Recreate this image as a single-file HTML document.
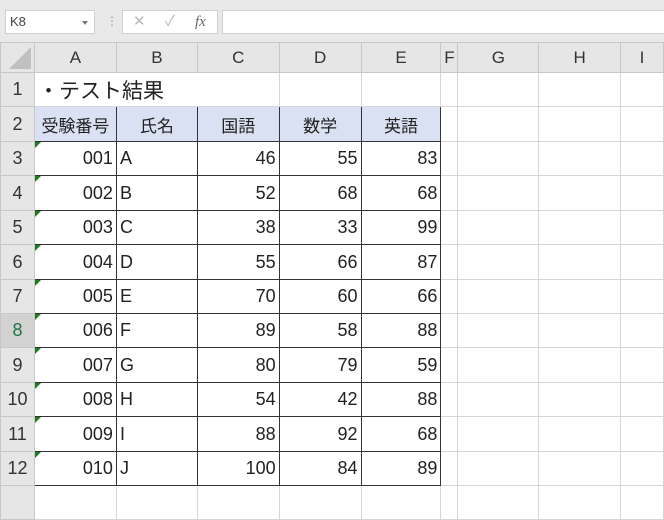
<!DOCTYPE html><html><head><meta charset="utf-8"><style>
body{margin:0;width:664px;height:497px;overflow:hidden;background:#fff;font-family:"Liberation Sans","Noto Sans CJK JP",sans-serif;position:relative}
.top{position:absolute;left:0;top:0;width:664px;height:42px;background:#e9e9e9}
.nb{position:absolute;left:5px;top:10px;width:90px;height:24px;background:#fff;border:1px solid #d0d0d0;box-sizing:border-box;font-size:13px;color:#444;line-height:22px;padding-left:4px}
.nb:after{content:"";position:absolute;right:6px;top:10px;border:3px solid transparent;border-top:4px solid #777}
.fx{position:absolute;left:122px;top:10px;width:96px;height:24px;background:#fff;border:1px solid #d0d0d0;box-sizing:border-box;color:#bbb;font-size:15px;line-height:22px}
.fb{position:absolute;left:222px;top:10px;width:450px;height:24px;background:#fff;border:1px solid #d0d0d0;box-sizing:border-box}
table{position:absolute;left:0;top:42px;border-collapse:collapse;table-layout:fixed}
td{border:1px solid #d6d6d6;padding:0 3px;font-size:18px;color:#222;white-space:nowrap;overflow:hidden;box-sizing:border-box;position:relative}
tr.h td{background:#e6e6e6;text-align:center;color:#333;font-size:17px;border-color:#c8c8c8;height:30px}
td.r{background:#e6e6e6;text-align:center;color:#333;font-size:18px;border-color:#c8c8c8;padding:0}
td.sel{background:#d2d2d2;color:#217346}
.d{border:1px solid #333}
.hd{background:#d9e1f2;text-align:center;font-size:17px}
.n{text-align:right}
.g:before{content:"";position:absolute;left:0;top:0;border-top:6px solid #1e7b1e;border-right:6px solid transparent}
</style></head><body>
<div class="top"></div>
<div class="nb">K8</div>
<div style="position:absolute;left:106px;top:14px;color:#999;font-size:12px">⋮</div>
<div class="fx"><span style="position:absolute;left:10px">✕</span><span style="position:absolute;left:42px">✓</span><span style="position:absolute;left:72px;color:#666;font-style:italic;font-family:'Liberation Serif',serif">fx</span></div>
<div class="fb"></div>
<table>
<colgroup><col style="width:34px"><col style="width:82px"><col style="width:81px"><col style="width:82px"><col style="width:82px"><col style="width:80px"><col style="width:17px"><col style="width:81px"><col style="width:82px"><col style="width:43px"></colgroup>
<tr class="h"><td style="position:relative"><div style="position:absolute;right:3px;bottom:3px;border-left:22px solid transparent;border-bottom:22px solid #c0c0c0"></div></td><td>A</td><td>B</td><td>C</td><td>D</td><td>E</td><td style="padding:0">F</td><td>G</td><td>H</td><td>I</td></tr>
<tr style="height:34px"><td class="r">1</td><td colspan="2" style="font-size:21px;border-right-color:#fff">・テスト結果</td><td></td><td></td><td></td><td></td><td></td><td></td><td></td></tr>
<tr style="height:35px"><td class="r">2</td><td class="d hd">受験番号</td><td class="d hd">氏名</td><td class="d hd">国語</td><td class="d hd">数学</td><td class="d hd">英語</td><td></td><td></td><td></td><td></td></tr>
<tr style="height:34px"><td class="r">3</td><td class="d n g">001</td><td class="d">A</td><td class="d n">46</td><td class="d n">55</td><td class="d n">83</td><td></td><td></td><td></td><td></td></tr>
<tr style="height:35px"><td class="r">4</td><td class="d n g">002</td><td class="d">B</td><td class="d n">52</td><td class="d n">68</td><td class="d n">68</td><td></td><td></td><td></td><td></td></tr>
<tr style="height:34px"><td class="r">5</td><td class="d n g">003</td><td class="d">C</td><td class="d n">38</td><td class="d n">33</td><td class="d n">99</td><td></td><td></td><td></td><td></td></tr>
<tr style="height:35px"><td class="r">6</td><td class="d n g">004</td><td class="d">D</td><td class="d n">55</td><td class="d n">66</td><td class="d n">87</td><td></td><td></td><td></td><td></td></tr>
<tr style="height:34px"><td class="r">7</td><td class="d n g">005</td><td class="d">E</td><td class="d n">70</td><td class="d n">60</td><td class="d n">66</td><td></td><td></td><td></td><td></td></tr>
<tr style="height:34px"><td class="r sel">8</td><td class="d n g">006</td><td class="d">F</td><td class="d n">89</td><td class="d n">58</td><td class="d n">88</td><td></td><td></td><td></td><td></td></tr>
<tr style="height:35px"><td class="r">9</td><td class="d n g">007</td><td class="d">G</td><td class="d n">80</td><td class="d n">79</td><td class="d n">59</td><td></td><td></td><td></td><td></td></tr>
<tr style="height:34px"><td class="r">10</td><td class="d n g">008</td><td class="d">H</td><td class="d n">54</td><td class="d n">42</td><td class="d n">88</td><td></td><td></td><td></td><td></td></tr>
<tr style="height:35px"><td class="r">11</td><td class="d n g">009</td><td class="d">I</td><td class="d n">88</td><td class="d n">92</td><td class="d n">68</td><td></td><td></td><td></td><td></td></tr>
<tr style="height:34px"><td class="r">12</td><td class="d n g">010</td><td class="d">J</td><td class="d n">100</td><td class="d n">84</td><td class="d n">89</td><td></td><td></td><td></td><td></td></tr>
<tr style="height:34px"><td class="r"></td><td></td><td></td><td></td><td></td><td></td><td></td><td></td><td></td><td></td></tr>
</table>
</body></html>
